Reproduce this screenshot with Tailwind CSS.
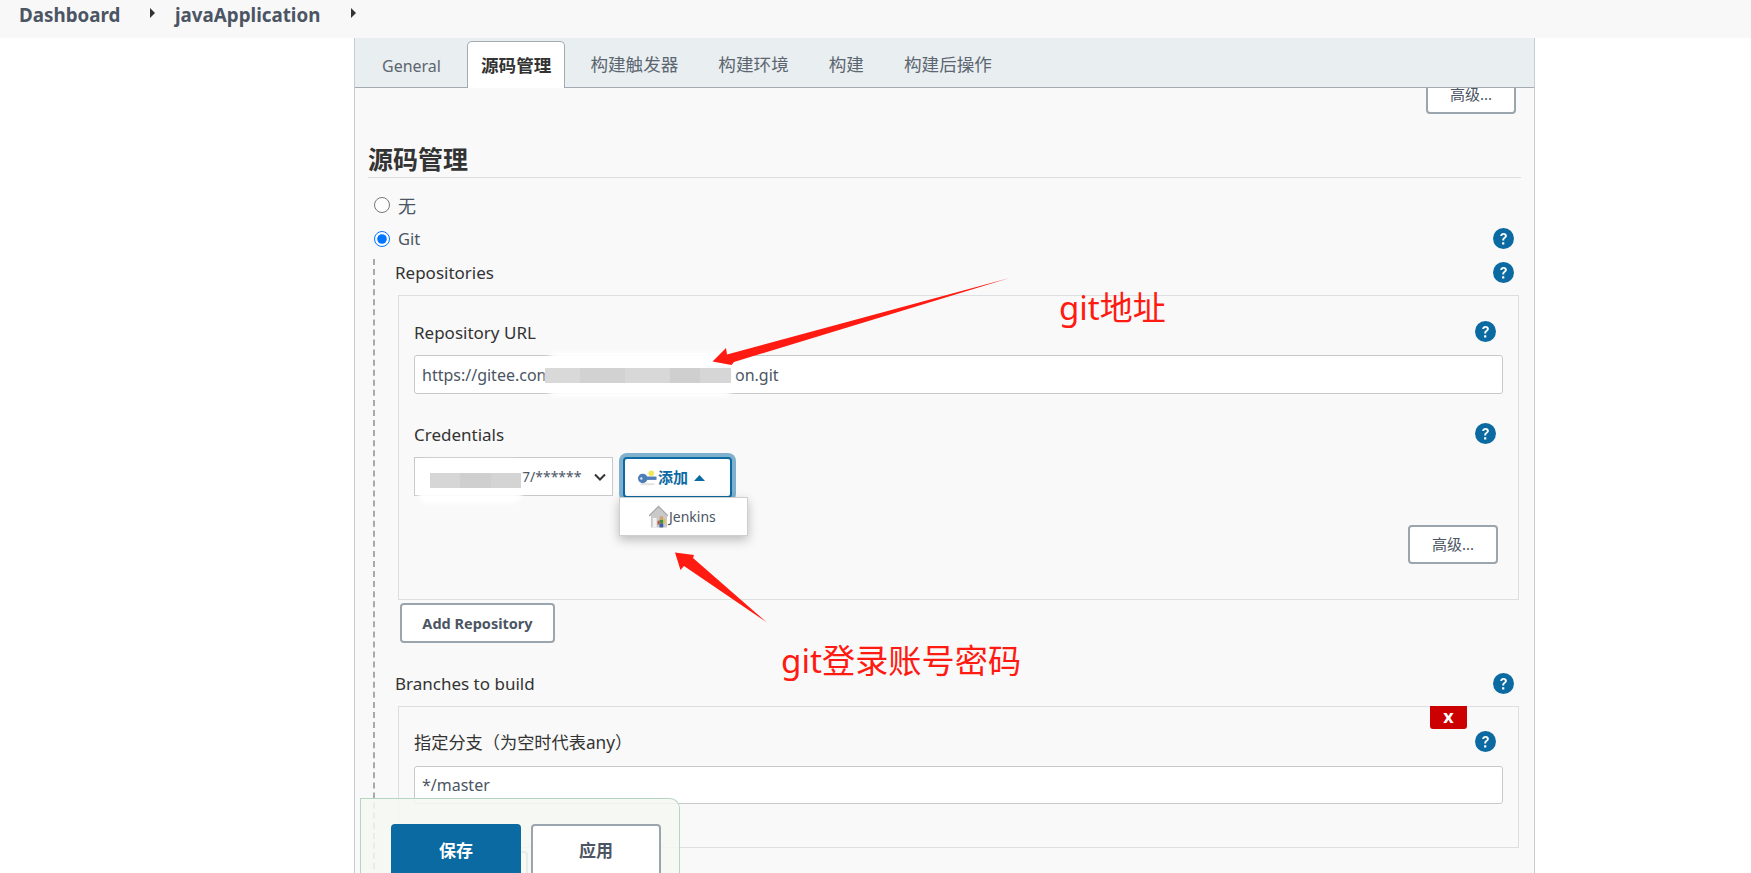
<!DOCTYPE html>
<html lang="zh-CN">
<head>
<meta charset="UTF-8">
<title>javaApplication Config</title>
<script src="https://cdn.jsdelivr.net/npm/@tailwindcss/browser@4"></script>
</head>
<body class="relative h-[873px] overflow-hidden bg-white text-[#333] font-['Noto_Sans','Noto_Sans_CJK_SC',sans-serif]">

<!-- breadcrumb -->
<div class="flex h-[38px] items-center bg-[#f8f8f8] pl-[19px] text-[18.8px] font-bold text-[#4b5563]">
  <span class="w-[131px] -mt-[8px]">Dashboard</span>
  <svg class="w-[5px] h-[10px] -mt-[12px]" viewBox="0 0 5 10"><path d="M0 0L5 5L0 10Z" fill="#333"/></svg>
  <span class="ml-[20px] w-[176px] -mt-[8px]">javaApplication</span>
  <svg class="w-[5px] h-[10px] -mt-[12px]" viewBox="0 0 5 10"><path d="M0 0L5 5L0 10Z" fill="#333"/></svg>
</div>

<!-- config panel -->
<div class="ml-[354px] h-[835px] w-[1181px] overflow-hidden border-x border-[#c6ccd1] bg-[#f9f9f9]">
  <!-- tabs -->
  <div class="relative z-10 flex h-[50px] items-end gap-[12px] border-b border-[#a3acb3] bg-[#e9eef1] pl-[13px] text-[17.6px] text-[#5c6670]">
    <span class="flex h-[46px] items-center border border-transparent px-[13px] pt-[3px] text-[16px]">General</span>
    <span class="-mb-px flex h-[47px] items-center rounded-t-[5px] border border-b-0 border-[#a3acb3] bg-white px-[13px] font-bold text-[#333]">源码管理</span>
    <span class="-ml-px flex h-[46px] items-center border border-transparent px-[13px]">构建触发器</span>
    <span class="flex h-[46px] items-center border border-transparent px-[13px]">构建环境</span>
    <span class="flex h-[46px] items-center border border-transparent px-[13px]">构建</span>
    <span class="flex h-[46px] items-center border border-transparent px-[13px]">构建后操作</span>
  </div>

  <div class="px-[13px]">
    <div class="flex h-[26px] items-end justify-end overflow-hidden pr-[5px]">
      <button class="h-[39px] w-[90px] shrink-0 rounded-[4px] border-2 border-[#9aa5ad] bg-white text-[15px] text-[#4b5563]">高级...</button>
    </div>

    <h2 class="mt-[32px] h-[32px] border-b border-[#dcdfe2] text-[25px] font-bold leading-[26px] text-[#333]">源码管理</h2>

    <label class="mt-[10px] flex h-[34px] items-center pl-[6px] text-[#4b5563]">
      <input type="radio" name="scm" class="m-0 h-[16px] w-[16px]">
      <span class="ml-[8px] mt-[3px] text-[18px]">无</span>
    </label>
    <div class="flex h-[34px] items-center justify-between pr-[7px] text-[16.5px] text-[#4b5563]">
      <label class="flex items-center pl-[6px]">
        <input type="radio" name="scm" checked class="m-0 h-[16px] w-[16px]">
        <span class="ml-[8px] mt-[1px]">Git</span>
      </label>
      <svg class="h-[21px] w-[21px] -mt-[2px]" viewBox="0 0 21 21"><circle cx="10.5" cy="10.5" r="10.5" fill="#0b6aa2"/><path d="M7.2 8.1c.1-2 1.5-3.1 3.4-3.1 1.9 0 3.3 1.1 3.3 2.8 0 1.3-.7 2-1.7 2.6-.8.5-1 .8-1 1.7v.4H9.3v-.6c0-1.2.4-1.8 1.3-2.4.8-.5 1.2-.9 1.2-1.6 0-.8-.5-1.2-1.2-1.2-.8 0-1.3.5-1.4 1.4zM9.1 14.200h2.200v2.200H9.100z" fill="#fff"/></svg>
    </div>

    <!-- git section -->
    <div class="ml-[5px] mt-[3px] h-[620px] border-l-2 border-dashed border-[#a9a9a9] pl-[20px]">
      <div class="flex h-[26px] items-center justify-between pr-[7px] text-[17px] text-[#333]">
        <span class="mt-[2px]">Repositories</span>
        <svg class="h-[21px] w-[21px]" viewBox="0 0 21 21"><circle cx="10.5" cy="10.5" r="10.5" fill="#0b6aa2"/><path d="M7.2 8.1c.1-2 1.5-3.1 3.4-3.1 1.9 0 3.3 1.1 3.3 2.8 0 1.3-.7 2-1.7 2.6-.8.5-1 .8-1 1.7v.4H9.3v-.6c0-1.2.4-1.800 1.3-2.4.8-.5 1.2-.9 1.2-1.6 0-.8-.5-1.2-1.2-1.2-.8 0-1.3.5-1.4 1.4zM9.100 14.200h2.200v2.200H9.100z" fill="#fff"/></svg>
      </div>

      <div class="ml-[3px] mr-[2px] mt-[10px] h-[305px] border border-[#dcdfe2] pl-[15px] pr-[15px] pt-[24px]">
        <div class="flex h-[26px] items-center justify-between pr-[7px] text-[17px]">
          <span>Repository URL</span>
          <svg class="h-[21px] w-[21px] -mt-[4px]" viewBox="0 0 21 21"><circle cx="10.5" cy="10.5" r="10.5" fill="#0b6aa2"/><path d="M7.2 8.1c.1-2 1.5-3.1 3.4-3.1 1.9 0 3.3 1.1 3.3 2.8 0 1.3-.7 2-1.7 2.6-.8.5-1 .8-1 1.7v.4H9.300v-.6c0-1.2.4-1.800 1.3-2.4.8-.5 1.2-.9 1.2-1.6 0-.8-.5-1.2-1.2-1.2-.8 0-1.3.5-1.4 1.4zM9.100 14.200h2.200v2.200H9.100z" fill="#fff"/></svg>
        </div>
        <div class="mt-[9px] flex h-[39px] items-center rounded-[3px] border border-[#c9c9c9] bg-white pl-[7px] pt-[1px] text-[16px] text-[#4b5563]">
          <span class="w-[123px] whitespace-nowrap">https://gitee.com</span>
          <span class="ml-[190px]">on.git</span>
        </div>

        <div class="mt-[28px] flex h-[26px] items-center justify-between pr-[7px] text-[17px]">
          <span>Credentials</span>
          <svg class="h-[21px] w-[21px] -mt-[4px]" viewBox="0 0 21 21"><circle cx="10.5" cy="10.5" r="10.5" fill="#0b6aa2"/><path d="M7.2 8.1c.1-2 1.5-3.1 3.4-3.1 1.9 0 3.3 1.1 3.3 2.8 0 1.3-.7 2-1.7 2.6-.8.5-1 .8-1 1.7v.4H9.300v-.6c0-1.2.4-1.800 1.3-2.4.8-.5 1.2-.9 1.2-1.6 0-.8-.5-1.2-1.2-1.2-.8 0-1.3.5-1.4 1.4zM9.100 14.200h2.200v2.200H9.100z" fill="#fff"/></svg>
        </div>
        <div class="mt-[9px] flex items-start gap-[10px]">
          <div class="flex h-[39px] w-[199px] items-center border border-[#c9c9c9] bg-white pl-[107px] text-[14px] text-[#4b5563]">
            <span>7/******</span>
            <svg class="ml-auto mr-[6px] h-[8px] w-[12px]" viewBox="0 0 12 8"><path d="M1 1.500L6 6.500L11 1.500" fill="none" stroke="#333" stroke-width="2"/></svg>
          </div>
          <button class="flex h-[41px] w-[109px] items-center rounded-[4px] border-2 border-[#0b6aa2] bg-white pl-[13px] text-[15px] font-bold text-[#0b6aa2] shadow-[0_0_0_4px_#7fb0cd]">
            <svg class="h-[17px] w-[19px]" viewBox="0 0 20 17"><ellipse cx="10" cy="15.500" rx="8" ry="1.200" fill="#e3e3e3"/><circle cx="5" cy="9.500" r="5" fill="#4e7db8"/><rect x="6" y="7.500" width="13.500" height="3.500" fill="#4e7db8"/><circle cx="14" cy="4" r="3" fill="#f4e65a"/><circle cx="3.500" cy="9.500" r="1.300" fill="#d5e2f2"/></svg>
            <span class="ml-[1px]">添加</span>
            <svg class="ml-[6px] h-[6px] w-[11px]" viewBox="0 0 11 6"><path d="M0 6L5.500 0L11 6Z" fill="#0b6aa2"/></svg>
          </button>
        </div>
        <div class="mt-[27px] flex justify-end pr-[5px]">
          <button class="h-[39px] w-[90px] rounded-[4px] border-2 border-[#9aa5ad] bg-white text-[15px] text-[#4b5563]">高级...</button>
        </div>
      </div>

      <button class="ml-[5px] mt-[3px] h-[40px] w-[155px] rounded-[4px] border-2 border-[#9aa5ad] bg-white pt-[1px] text-[14.500px] font-bold text-[#4b5563]">Add Repository</button>

      <div class="mt-[27px] flex h-[26px] items-center justify-between pr-[7px] text-[17px]">
        <span class="mt-[2px]">Branches to build</span>
        <svg class="h-[21px] w-[21px]" viewBox="0 0 21 21"><circle cx="10.5" cy="10.5" r="10.5" fill="#0b6aa2"/><path d="M7.2 8.1c.1-2 1.5-3.1 3.4-3.1 1.9 0 3.3 1.1 3.3 2.8 0 1.3-.7 2-1.7 2.6-.8.5-1 .8-1 1.7v.4H9.300v-.6c0-1.2.4-1.800 1.3-2.4.8-.5 1.2-.9 1.2-1.6 0-.8-.5-1.2-1.2-1.2-.8 0-1.3.5-1.4 1.4zM9.100 14.200h2.200v2.200H9.100z" fill="#fff"/></svg>
      </div>
      <div class="relative ml-[3px] mr-[2px] mt-[10px] h-[142px] border border-[#dcdfe2] pl-[15px] pr-[15px] pt-[23px]">
        <span class="absolute right-[51px] -top-px flex h-[23px] w-[37px] items-center justify-center rounded-b-[3px] bg-[#cc0000] pb-[3px] text-[18px] font-bold leading-none text-white">x</span>
        <div class="flex h-[26px] items-center justify-between pr-[7px] text-[17.200px]">
          <span>指定分支（为空时代表any）</span>
          <svg class="h-[21px] w-[21px] -mt-[4px]" viewBox="0 0 21 21"><circle cx="10.5" cy="10.5" r="10.5" fill="#0b6aa2"/><path d="M7.2 8.1c.1-2 1.5-3.1 3.4-3.1 1.9 0 3.3 1.1 3.3 2.8 0 1.3-.7 2-1.7 2.6-.8.5-1 .8-1 1.7v.4H9.300v-.6c0-1.2.4-1.800 1.3-2.4.8-.5 1.2-.9 1.2-1.6 0-.8-.5-1.2-1.2-1.2-.8 0-1.3.5-1.4 1.4zM9.100 14.200h2.200v2.200H9.100z" fill="#fff"/></svg>
        </div>
        <div class="mt-[10px] flex h-[38px] items-center rounded-[3px] border border-[#c9c9c9] bg-white pl-[7px] text-[16px] text-[#4b5563]">*/master</div>
      </div>
      <div class="ml-[5px] mt-[3px] h-[40px] w-[128px] rounded-[4px] border-2 border-[#9aa5ad] bg-white"></div>
    </div>
  </div>
</div>

<!-- credentials dropdown -->
<div class="absolute left-[619px] top-[497px] z-20 flex h-[39px] w-[129px] items-center border border-[#cfcfcf] bg-white pl-[29px] text-[14px] text-[#4b5563] shadow-[0_4px_10px_rgba(0,0,0,0.25)]">
  <svg class="h-[27px] w-[19px]" viewBox="0 0 20 27"><path d="M1 13L10 4L19 13V25H2V13Z" fill="#c9c9c9"/><path d="M0 13L10 3L20 13" fill="none" stroke="#a8a8a8" stroke-width="1.500"/><rect x="4" y="15" width="4" height="10" fill="#f2f2f2"/><circle cx="13" cy="15" r="2" fill="#d9a06b"/><rect x="11" y="17" width="4" height="4" fill="#3f8f4a"/><rect x="15" y="16" width="2" height="5" fill="#e0c040"/><rect x="11" y="21" width="4" height="4" fill="#3b5fa8"/><rect x="9" y="18" width="2" height="4" fill="#c64a3a"/></svg>
  <span class="ml-[1px]">Jenkins</span>
</div>

<!-- redaction patches -->
<div class="absolute left-[545px] top-[352px] z-20 h-[45px] w-[190px] rounded-[14px] bg-white/95 blur-[2px]"></div>
<div class="absolute left-[545px] top-[368px] z-20 flex h-[15px] w-[186px]">
  <span class="w-[35px] bg-[#d9d9d9]"></span><span class="w-[45px] bg-[#d2d2d2]"></span><span class="w-[45px] bg-[#d8d8d8]"></span><span class="w-[30px] bg-[#cfcfcf]"></span><span class="w-[31px] bg-[#d6d6d6]"></span>
</div>
<div class="absolute left-[418px] top-[460px] z-20 h-[44px] w-[104px] rounded-[10px] bg-white/90 blur-[2px]"></div>
<div class="absolute left-[430px] top-[473px] z-20 flex h-[15px] w-[91px]">
  <span class="w-[30px] bg-[#d6d6d6]"></span><span class="w-[31px] bg-[#cfcfcf]"></span><span class="w-[30px] bg-[#d4d4d4]"></span>
</div>

<!-- save bar -->
<div class="absolute bottom-0 left-[360px] z-30 h-[75px] w-[320px] rounded-tr-[10px] border border-b-0 border-[#b7d6c2] bg-[#f4f8f2]/85">
  <div class="flex gap-[10px] pl-[30px] pt-[25px]">
    <button class="h-[60px] w-[130px] rounded-t-[4px] bg-[#0b6aa2] pb-[6px] text-[17px] font-bold text-white">保存</button>
    <button class="h-[60px] w-[130px] rounded-t-[4px] border-2 border-[#9aa5ad] bg-white pb-[6px] text-[17px] font-bold text-[#4b5563]">应用</button>
  </div>
</div>

<!-- annotations -->
<svg class="absolute left-0 top-0 z-40 h-[873px] w-[1751px]" viewBox="0 0 1751 873" fill="#ff1a12">
  <path d="M1009.500 278L734 362L731.500 365L712.500 361.500L726 348L727 354.500Z"/>
  <path d="M767 622.500L693 558L694 555L675 552.500L680.500 570L684 566Z"/>
</svg>
<span class="absolute left-[1059px] top-[286px] z-40 text-[33px] leading-[44px] text-[#ff1a12]">git地址</span>
<span class="absolute left-[781px] top-[639px] z-40 text-[33.200px] leading-[44px] text-[#ff1a12]">git登录账号密码</span>
</body>
</html>
